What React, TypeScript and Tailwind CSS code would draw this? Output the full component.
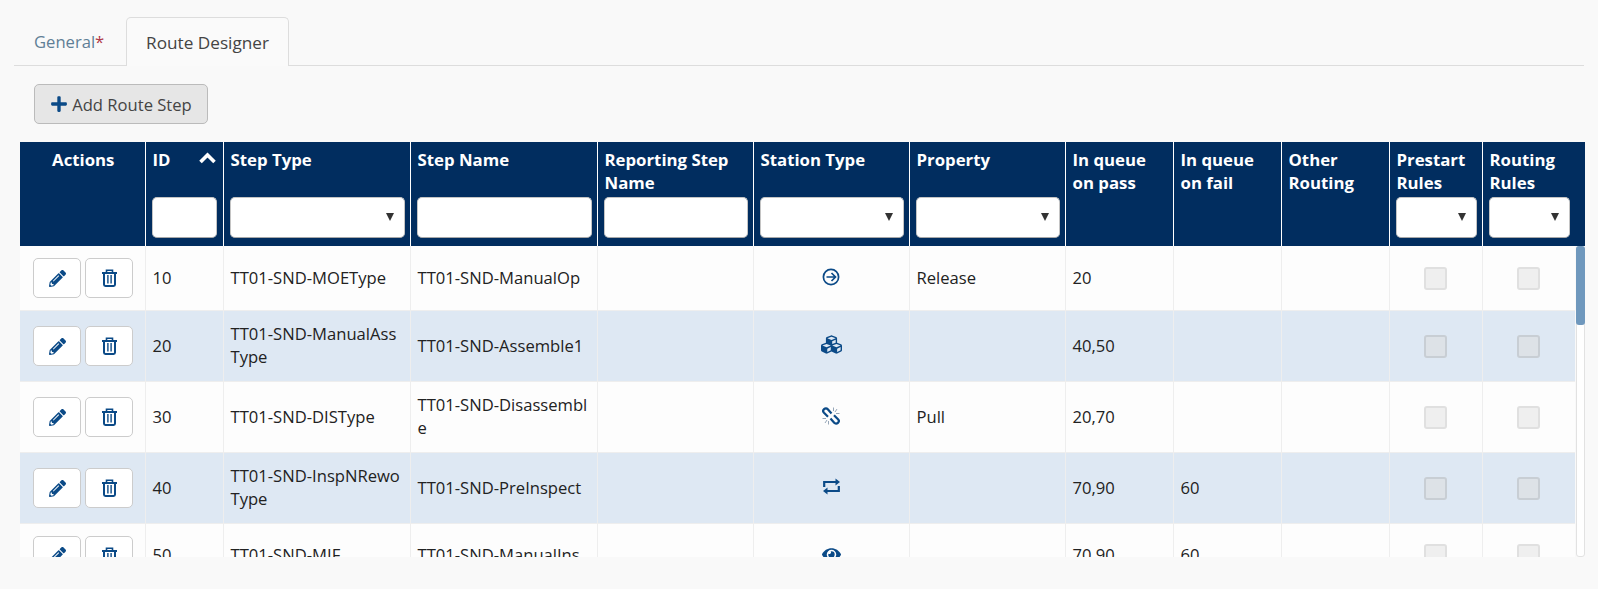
import React from 'react';
import { FaPencilAlt, FaCubes, FaEye, FaPlus } from 'react-icons/fa';

const CircleArrow = () => (
  <svg width="18" height="18" viewBox="0 0 18 18" fill="none" stroke="currentColor">
    <circle cx="9" cy="9" r="7.6" strokeWidth="1.7" />
    <path d="M4.5 9H13M9.5 5L13.5 9L9.5 13" strokeWidth="1.7" />
  </svg>
);

const Broken = () => (
  <svg width="18" height="18" viewBox="0 0 18 18" fill="none" stroke="currentColor">
    <path d="M9.5 6.5L5.8 2.2a2.6 2.6 0 0 0-3.8 3.6L6 9.8" strokeWidth="2.2" />
    <path d="M8.5 11.5L12.2 15.8a2.6 2.6 0 0 0 3.8-3.6L12 8.2" strokeWidth="2.2" />
    <path d="M11.5 .5V4M15 2L13 5M17.5 6.5H14M.5 11.5H4M3 16L5 13M6.5 17.5V14" stroke="#8a9cb0" strokeWidth="0.9" />
  </svg>
);

const Retweet = () => (
  <svg width="19" height="17" viewBox="0 0 19 17" fill="currentColor">
    <path d="M2.2 9V4H14" fill="none" stroke="currentColor" strokeWidth="2.2" />
    <path d="M13.5 .5L18 4L13.5 7.5Z" />
    <path d="M16.8 8V13H5" fill="none" stroke="currentColor" strokeWidth="2.2" />
    <path d="M5.5 9.5L1 13L5.5 16.5Z" />
  </svg>
);

const Trash = () => (
  <svg width="15" height="18" viewBox="0 0 15 18" fill="currentColor">
    <path d="M0 3h15v2H0z" />
    <path d="M4.5 3.5V1.2h6v2.3" fill="none" stroke="currentColor" strokeWidth="1.6" />
    <path d="M2 5v10.5a1.4 1.4 0 0 0 1.4 1.4h8.2a1.4 1.4 0 0 0 1.4-1.4V5" fill="none" stroke="currentColor" strokeWidth="2" />
    <path d="M5.2 6h1.4v8.5H5.2zM8.4 6h1.4v8.5H8.4z" />
  </svg>
);

type Step = {
  id: string;
  type: string;
  name: string;
  icon: React.ReactNode;
  property: string;
  pass: string;
  fail: string;
  height: string;
  striped: boolean;
};

const steps: Step[] = [
  { id: '10', type: 'TT01-SND-MOEType', name: 'TT01-SND-ManualOp', icon: <CircleArrow />, property: 'Release', pass: '20', fail: '', height: 'h-[65px]', striped: false },
  { id: '20', type: 'TT01-SND-ManualAssType', name: 'TT01-SND-Assemble1', icon: <FaCubes className="text-[21px]" />, property: '', pass: '40,50', fail: '', height: 'h-[71px]', striped: true },
  { id: '30', type: 'TT01-SND-DISType', name: 'TT01-SND-Disassemble', icon: <Broken />, property: 'Pull', pass: '20,70', fail: '', height: 'h-[71px]', striped: false },
  { id: '40', type: 'TT01-SND-InspNRewoType', name: 'TT01-SND-PreInspect', icon: <Retweet />, property: '', pass: '70,90', fail: '60', height: 'h-[71px]', striped: true },
  { id: '50', type: 'TT01-SND-MIF', name: 'TT01-SND-ManualIns', icon: <FaEye className="text-[19px]" />, property: '', pass: '70,90', fail: '60', height: 'h-[64px]', striped: false },
];

const Filter = ({ select }: { select?: boolean }) => (
  <div className="relative -ml-px h-[41px] rounded-[5px] border border-[#c4c4c4] border-b-[#a8a8a8] bg-white">
    {select && <span className="absolute right-[10px] top-[15px] h-0 w-0 border-x-[4px] border-t-[8px] border-x-transparent border-t-[#333333]" />}
  </div>
);

const Head = ({ title, filter, select, center, last, narrow, children }: { title?: string; filter?: boolean; select?: boolean; center?: boolean; last?: boolean; narrow?: boolean; children?: React.ReactNode }) => (
  <div className={`flex h-full flex-col justify-between pb-[8px] pl-[7px] pt-[6px] ${last ? 'pr-[15px]' : narrow ? 'border-r border-white pr-[6px]' : 'border-r border-white pr-[5px]'}`}>
    <div className={`relative ${center ? 'text-center' : ''}`}>
      {title}
      {children}
    </div>
    {filter && <Filter select={select} />}
  </div>
);

const Cell = ({ children, center }: { children?: React.ReactNode; center?: boolean }) => (
  <div className={`flex h-full items-center border-r border-[#eeeeee] px-[7px] pb-[2px] last:border-r-0 ${center ? 'justify-center' : ''}`}>
    <div className="min-w-0 break-all">{children}</div>
  </div>
);

const Check = ({ striped }: { striped: boolean }) => (
  <div className={`mt-[2px] h-[23px] w-[23px] rounded-[3px] border-2 ${striped ? 'border-[#c8ced4] bg-[#dde2e7]' : 'border-[#e0e0e0] bg-[#efefef]'}`} />
);

export default function App() {
  return (
    <div className="h-[589px] w-[1598px] overflow-hidden bg-[#f9f9f9] text-[16.6px] leading-[23px] text-[#222222] [font-family:'Open_Sans',sans-serif]">
      <div className="ml-[14px] mr-[14px] flex h-[66px] items-end border-b border-[#dddddd] pl-[1px]">
        <div className="flex h-[48px] w-[111px] items-center pl-[19px] text-[#5f7f96]">
          General<span className="text-[#b03a48]">*</span>
        </div>
        <div className="-mb-px flex h-[49px] w-[163px] items-center justify-center rounded-t-[5px] border border-b-0 border-[#dddddd] bg-[#fafafa] text-[17.2px] font-medium text-[#444444]">
          Route Designer
        </div>
      </div>

      <div className="ml-[34px] mt-[18px]">
        <button className="flex h-[40px] w-[174px] items-center justify-center gap-[4px] rounded-[5px] border border-[#bbbbbb] bg-[#e6e6e6] text-[#444444]">
          <FaPlus className="text-[18px] text-[#0b4a87]" />
          Add Route Step
        </button>
      </div>

      <div className="ml-[20px] mt-[18px] w-[1565px]">
        <div className="grid h-[104px] grid-cols-[125.5px_78px_187px_187px_156px_156px_156px_108px_108px_108px_93px_1fr] bg-[#012d5f] text-[16.8px] font-bold text-white">
          <Head title="Actions" center />
          <Head title="ID" filter narrow>
            <svg className="absolute right-[1px] top-[4px]" width="17" height="12" viewBox="0 0 17 12" fill="none" stroke="currentColor" strokeWidth="3.6">
              <path d="M1.5 10L8.5 3L15.5 10" />
            </svg>
          </Head>
          <Head title="Step Type" filter select />
          <Head title="Step Name" filter />
          <Head title="Reporting Step Name" filter />
          <Head title="Station Type" filter select />
          <Head title="Property" filter select />
          <Head title="In queue on pass" />
          <Head title="In queue on fail" />
          <Head title="Other Routing" />
          <Head title="Prestart Rules" filter select />
          <Head title="Routing Rules" filter select last />
        </div>

        <div className="flex h-[311px] overflow-hidden">
          <div className="w-[1555px] shrink-0">
            {steps.map((s) => (
              <div
                key={s.id}
                className={`grid shrink-0 grid-cols-[125.5px_78px_187px_187px_156px_156px_156px_108px_108px_108px_93px_1fr] items-center border-b border-[#eeeeee] ${s.height} ${s.striped ? 'bg-[#dee8f3]' : 'bg-[#fdfdfd]'}`}
              >
                <div className="flex h-full items-center gap-[4px] border-r border-[#eeeeee] pl-[13px]">
                  <button className="flex h-[40px] w-[48px] items-center justify-center rounded-[5px] border border-[#cccccc] bg-white text-[17px] text-[#0b4a87]">
                    <FaPencilAlt />
                  </button>
                  <button className="flex h-[40px] w-[48px] items-center justify-center rounded-[5px] border border-[#cccccc] bg-white text-[#0b4a87]">
                    <Trash />
                  </button>
                </div>
                <Cell>{s.id}</Cell>
                <Cell>{s.type}</Cell>
                <Cell>{s.name}</Cell>
                <Cell />
                <Cell center>
                  <span className="mb-[1px] flex text-[#0b4a87]">{s.icon}</span>
                </Cell>
                <Cell>{s.property}</Cell>
                <Cell>{s.pass}</Cell>
                <Cell>{s.fail}</Cell>
                <Cell />
                <Cell center>
                  <Check striped={s.striped} />
                </Cell>
                <Cell center>
                  <Check striped={s.striped} />
                </Cell>
              </div>
            ))}
          </div>
          <div className="ml-auto h-full w-[9px] rounded-[3px] border border-[#e2e2e2] bg-white">
            <div className="-m-px h-[79px] w-[9px] rounded-[3px] bg-[#6f98bd]" />
          </div>
        </div>
      </div>
    </div>
  );
}
